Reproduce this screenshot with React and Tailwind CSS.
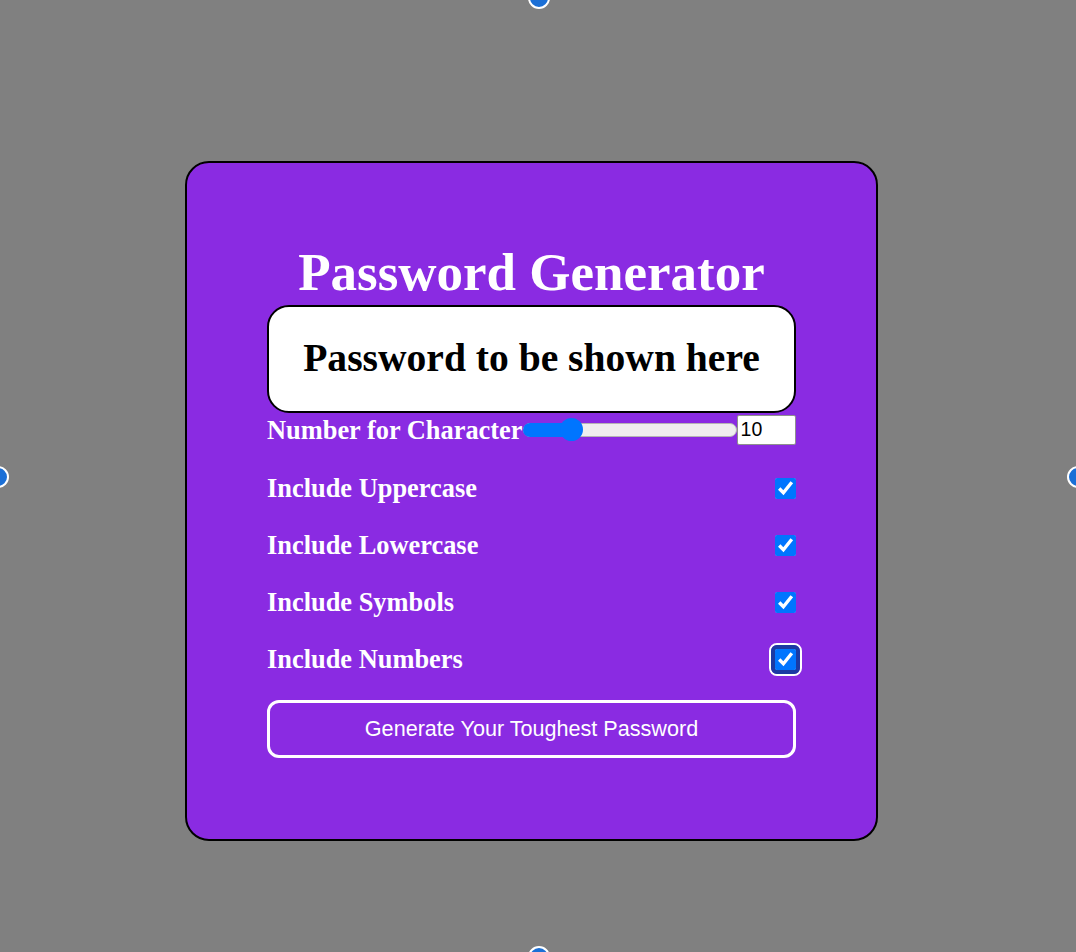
import React, { useState } from 'react';

const serif = { fontFamily: '"Liberation Serif", "Times New Roman", serif' };
const sans = { fontFamily: '"Liberation Sans", Arial, sans-serif' };

// selection handles drawn around the page edges
const Handle = ({ className }) => (
  <span className={`absolute w-[22px] h-[22px] rounded-full bg-[#1b6fd6] border-[2.5px] border-white ${className}`} />
);

const OptionRow = ({ label, checked, onChange, focused }) => (
  <div className="flex items-center justify-between h-[30px]">
    <span className="text-[26.4px] leading-[30px] font-bold text-white" style={serif}>{label}</span>
    {focused ? (
      <span className="inline-flex rounded-[8px] border-2 border-white -mr-[6px]">
        <span className="inline-flex rounded-[6px] border-[3px] border-[#1c3aa3] bg-[#1c3aa3] p-px">
          <input
            type="checkbox"
            checked={checked}
            onChange={onChange}
            className="m-0 w-[21px] h-[21px] accent-[#0075ff]"
          />
        </span>
      </span>
    ) : (
      <input
        type="checkbox"
        checked={checked}
        onChange={onChange}
        className="m-0 w-[21px] h-[21px] accent-[#0075ff]"
      />
    )}
  </div>
);

const App = () => {
  const [length, setLength] = useState(10);
  const [options, setOptions] = useState({
    upper: true,
    lower: true,
    symbols: true,
    numbers: true,
  });

  const toggle = (key) => setOptions(prev => ({ ...prev, [key]: !prev[key] }));

  const thumbLeft = 37;

  return (
    <div className="relative w-full h-[952px] overflow-hidden bg-[#808080] pt-[161px] pl-[185px]">
      <Handle className="left-[528px] -top-[13px]" />
      <Handle className="-left-[13px] top-[466px]" />
      <Handle className="left-[1067px] top-[466px]" />
      <Handle className="left-[528px] top-[946px]" />

      <div className="w-[693px] h-[680px] rounded-[24px] border-2 border-black bg-[#8a2be2] pt-[80px] px-[80px]">
        <h1 className="text-[53px] leading-[59px] font-bold text-white text-center mb-[3px]" style={serif}>
          Password Generator
        </h1>

        <div className="h-[108px] flex items-center justify-center bg-white border-2 border-black rounded-[22px]">
          <span className="text-[39.6px] font-bold text-black" style={serif}>Password to be shown here</span>
        </div>

        <div className="flex flex-col gap-[27px]">
          <div className="flex items-center h-[33px]">
            <span className="text-[26.4px] leading-[30px] font-bold text-white" style={serif}>Number for Character</span>
            <div className="relative w-[214px] h-[23px] flex items-center">
              <div className="w-full h-[14px] rounded-full bg-[#efefef] border border-[#b5b5b5]" />
              <div className="absolute left-0 top-[4.5px] h-[14px] w-[48px] rounded-full bg-[#0075ff]" />
              <div
                className="absolute top-0 w-[23px] h-[23px] rounded-full bg-[#0075ff]"
                style={{ left: thumbLeft }}
              />
            </div>
            <input
              type="text"
              value={length}
              onChange={(e) => setLength(e.target.value)}
              className="w-[59px] h-[30px] px-[3px] bg-white border border-[#8f8f8f] rounded-[2px] text-[19.5px] text-black outline-none"
              style={sans}
            />
          </div>

          <OptionRow label="Include Uppercase" checked={options.upper} onChange={() => toggle('upper')} />
          <OptionRow label="Include Lowercase" checked={options.lower} onChange={() => toggle('lower')} />
          <OptionRow label="Include Symbols" checked={options.symbols} onChange={() => toggle('symbols')} />
          <OptionRow label="Include Numbers" checked={options.numbers} onChange={() => toggle('numbers')} focused />

          <button
            type="button"
            className="-mt-px h-[58px] w-full rounded-[12px] border-[3px] border-white text-white text-[21.6px]"
            style={sans}
          >
            Generate Your Toughest Password
          </button>
        </div>
      </div>
    </div>
  );
};

export default App;
